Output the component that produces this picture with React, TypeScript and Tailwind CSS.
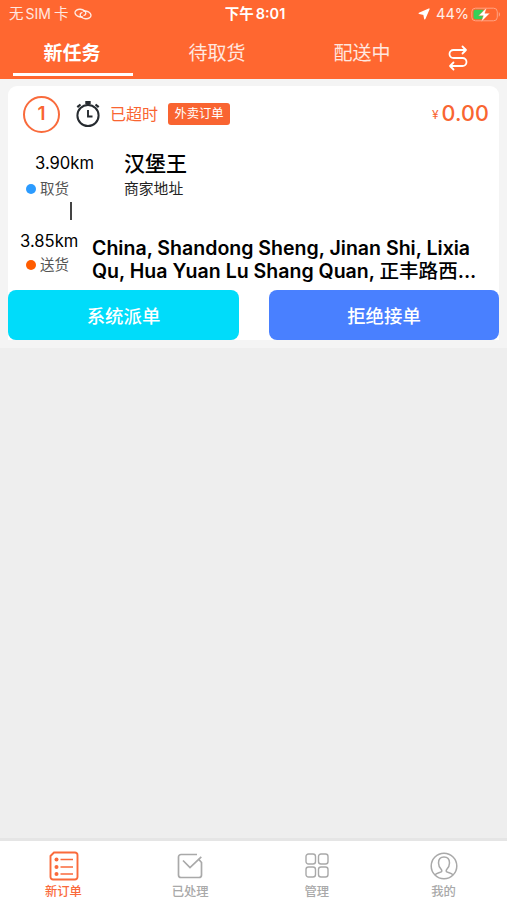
import React, { useState } from 'react';

const tabs = ['新任务', '待取货', '配送中'];

const StatusBar: React.FC = () => (
  <div className="h-[28px] pl-[9px] pr-[6px] grid grid-cols-[1fr_auto_1fr] items-center text-[14.5px] leading-none">
    <div className="flex items-center gap-[6px] text-white/85">
      <span className="flex gap-[2px]"><span>无</span><span className="text-[14px]">SIM</span><span className="ml-px">卡</span></span>
      <svg width="18" height="12" viewBox="0 0 18 12" fill="none" stroke="currentColor" strokeWidth="1.4" strokeLinecap="round">
        <path d="M8.500 8.900C5 9.400 1.200 7.700 1 4.900.900 2.400 3.500 1 6.500 1.300c3.200.3 5.600 2.200 5.300 4.400-.1.900-.8 1.500-1.800 1.700" />
        <path d="M9.500 3.100c3.500-.5 7.300 1.200 7.500 4 .1 2.500-2.500 3.900-5.500 3.600-3.200-.3-5.600-2.200-5.300-4.400.1-.9.800-1.500 1.800-1.700" />
      </svg>
    </div>
    <div className="flex gap-[2px] font-semibold"><span>下午</span><span>8:01</span></div>
    <div className="flex items-center justify-end">
      <svg width="12" height="12" viewBox="0 0 12 12" fill="currentColor" className="mr-[6px]">
        <path d="M11 1 6.800 10.800 5.900 6.300 1.200 5.400z" stroke="currentColor" strokeWidth="1.3" strokeLinejoin="round" />
      </svg>
      <span className="text-[14.5px] text-white/90 mr-[2px]">44%</span>
      <svg width="30" height="15" viewBox="0 0 30 15">
        <rect x=".8" y="1.2" width="25.5" height="12.600" rx="3.600" fill="none" stroke="#ffa382" strokeWidth="1" />
        <path d="M4.500 2.800h8v9.400h-8a2 2 0 0 1-2-2V4.800a2 2 0 0 1 2-2z" fill="#34d058" />
        <path d="M27.800 5.300v4.400c1.600-.6 1.600-3.800 0-4.400z" fill="#ffa382" />
        <path d="M15.800.5 7.500 8.700h4.800l-2.200 6.300 8.800-8.700h-5z" fill="#fff" stroke="#ff6730" strokeWidth=".4" />
      </svg>
    </div>
  </div>
);

const ListIcon = () => (
  <svg width="30" height="30" viewBox="0 0 30 30" fill="none" stroke="currentColor" strokeWidth="1.900" className="ml-[2px]">
    <path d="M5 1.500h21a2.500 2.500 0 0 1 2.500 2.500v22a2.500 2.500 0 0 1-2.500 2.500H4A2.500 2.500 0 0 1 1.500 26V5z" />
    <path d="M11.500 8.500h12.500M11.500 16h12.500M11.500 23h12.500" strokeWidth="1.500" />
    <g fill="currentColor" stroke="none"><circle cx="7.500" cy="8.500" r="2" /><circle cx="7.500" cy="16" r="2" /><circle cx="7.500" cy="23" r="2" /></g>
  </svg>
);

const DoneIcon = () => (
  <svg width="26" height="26" viewBox="0 0 26 26" fill="none" stroke="currentColor" strokeWidth="1.700">
    <path d="M20 1.500H4A2.500 2.500 0 0 0 1.500 4v18A2.500 2.500 0 0 0 4 24.500h18a2.500 2.500 0 0 0 2.500-2.500V9.500L21.500 6" />
    <path d="m6 7.500 7 7L24.300 3.800" />
  </svg>
);

const GridIcon = () => (
  <svg width="24" height="25" viewBox="0 0 24 25" fill="none" stroke="currentColor" strokeWidth="1.400">
    <rect x="1" y="1" width="9.500" height="10" rx="2.500" />
    <rect x="13.500" y="1" width="9.500" height="10" rx="2.500" />
    <rect x="1" y="14" width="9.500" height="10" rx="2.500" />
    <rect x="13.500" y="14" width="9.500" height="10" rx="2.500" />
  </svg>
);

const UserIcon = () => (
  <svg width="28" height="28" viewBox="0 0 28 28" fill="none" stroke="currentColor" strokeWidth="1.500">
    <circle cx="14" cy="14" r="12.800" />
    <path d="M5 22.800c1.500-1.500 3.800-2 5.700-2.700 1.300-.5 1.400-1.600.6-2.500C9.500 15.700 8.500 13.500 8.500 11c0-3.600 2.200-5.900 5.500-5.900s5.500 2.300 5.500 5.900c0 2.500-1 4.700-2.800 6.600-.8.900-.7 2 .6 2.500 1.900.7 4.200 1.200 5.700 2.700" />
  </svg>
);

const navItems = [
  { label: '新订单', icon: <ListIcon /> },
  { label: '已处理', icon: <DoneIcon /> },
  { label: '管理', icon: <GridIcon /> },
  { label: '我的', icon: <UserIcon /> },
];

const OrderCard: React.FC = () => (
  <div className="h-[254px] bg-white rounded-t-[9px] flex flex-col text-black">
    {/* Order header */}
    <div className="h-[56px] pl-[15px] pr-[10px] flex items-center text-[#f96531]">
      <div className="size-[37px] rounded-full border-2 border-[#f96b3c] flex items-center justify-center text-[19px] font-semibold">1</div>
      <svg width="26" height="28" viewBox="0 0 26 28" fill="none" stroke="#262b30" strokeWidth="2" className="ml-[15px] -mt-px">
        <circle cx="13" cy="15.500" r="10.600" />
        <path d="M13 10v6.500h4.500" strokeWidth="1.900" />
        <path d="M10.300 2.500h5.400M13 3v3" strokeWidth="3" />
        <path d="m2.300 7.200 3.200-2.700M23.700 7.200l-3.200-2.700" strokeWidth="2.200" />
      </svg>
      <span className="ml-[9px] text-[16px]">已超时</span>
      <span className="ml-[10px] w-[62px] h-[22px] rounded-[3px] bg-[#f96431] text-white text-[12.300px] flex items-center justify-center pt-px">外卖订单</span>
      <div className="ml-auto flex items-center">
        <span className="text-[12px] mr-[3px] mt-[2px]">¥</span>
        <span className="text-[21.500px] font-medium tracking-[0.100px] -mt-px">0.00</span>
      </div>
    </div>

    {/* Pickup */}
    <div className="h-[82px] flex pt-[8px]">
      <div className="w-[116px]">
        <div className="pl-[27px] text-[16.600px] leading-[26px]">3.90km</div>
        <div className="pl-[18px] mt-px flex items-center gap-[4px] text-[14.500px] leading-[24px] text-[#555]">
          <span className="size-[10px] rounded-full bg-[#2b9bff]" />取货
        </div>
        <div className="ml-[62px] mt-px w-[1.500px] h-[18px] bg-[#444]" />
      </div>
      <div>
        <div className="mt-px text-[21px] leading-[26px] font-medium">汉堡王</div>
        <div className="text-[14.800px] leading-[24px] text-[#222]">商家地址</div>
      </div>
    </div>

    {/* Delivery */}
    <div className="h-[66px] flex">
      <div className="w-[84px] pt-[4px]">
        <div className="pl-[12px] text-[16.600px] leading-[26px]">3.85km</div>
        <div className="pl-[18px] flex items-center gap-[4px] text-[14.500px] leading-[22px] text-[#555]">
          <span className="size-[10px] rounded-full bg-[#ff5c00]" />送货
        </div>
      </div>
      <div className="pt-[13px] text-[19.550px] leading-[23px] font-semibold whitespace-nowrap">
        <div>China, Shandong Sheng, Jinan Shi, Lixia</div>
        <div>Qu, Hua Yuan Lu Shang Quan, <span className="font-medium">正丰路西</span>...</div>
      </div>
    </div>

    {/* Actions */}
    <div className="flex justify-between text-white text-[18.400px] font-medium">
      <button className="w-[231px] h-[50px] pt-[3px] rounded-[8px] bg-[#00dcfa]">系统派单</button>
      <button className="w-[230px] h-[50px] pt-[3px] rounded-[8px] bg-[#4980ff]">拒绝接单</button>
    </div>
  </div>
);

export default function App() {
  const [activeTab, setActiveTab] = useState(0);
  const [activeNav, setActiveNav] = useState(0);

  return (
    <div className="w-[507px] h-[900px] flex flex-col overflow-hidden bg-[#eeeeee] font-[Inter,'Noto_Sans_CJK_SC',sans-serif]">
      <header className="h-[79px] bg-[#ff6730] text-white">
        <StatusBar />
        <div className="flex h-[51px]">
          {tabs.map((tab, i) => (
            <button
              key={tab}
              onClick={() => setActiveTab(i)}
              className={`w-[145px] flex flex-col items-center text-[19px] leading-[28px] pt-[12px] ${activeTab === i ? 'font-bold' : 'text-white/85'}`}
            >
              <span className="-ml-px">{tab}</span>
              {activeTab === i && <span className="mt-[5px] w-[120px] h-[3px] bg-white" />}
            </button>
          ))}
          <svg width="20" height="26" viewBox="0 0 20 26" fill="none" stroke="currentColor" strokeWidth="1.800" strokeLinecap="round" strokeLinejoin="round" className="mt-[17px] ml-[13px]">
            <path d="M18 5H5.500a4 4 0 0 0 0 8h9a4 4 0 0 1 0 8H2M14.500 1.500 18 5l-3.500 3.500M5.500 17.500 2 21l3.500 3.500" />
          </svg>
        </div>
      </header>

      <main className="flex-1">
        <div className="bg-[#f4f4f4] px-2 pt-[7px] pb-[8px]">
          <OrderCard />
        </div>
      </main>

      <nav className="h-[62px] bg-white border-t-3 border-[#e5e5e5] grid grid-cols-4">
        {navItems.map((item, i) => (
          <button
            key={item.label}
            onClick={() => setActiveNav(i)}
            className={`flex flex-col items-center pt-[9px] text-[12.300px] leading-[18px] font-medium ${activeNav === i ? 'text-[#fa6a3b]' : 'text-[#a9a9a9]'}`}
          >
            <span className="h-[31px] mb-[2px] flex items-center">{item.icon}</span>
            {item.label}
          </button>
        ))}
      </nav>
    </div>
  );
}
